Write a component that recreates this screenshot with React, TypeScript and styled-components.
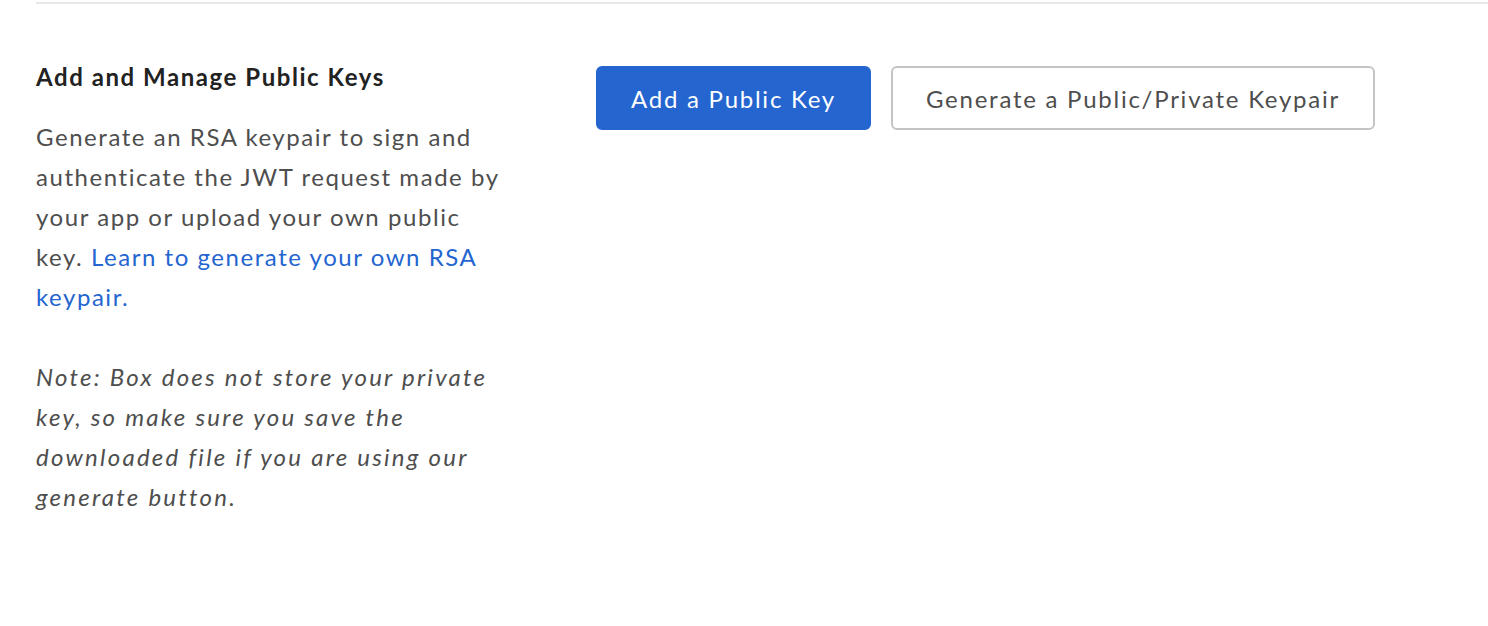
import * as React from "react";
import styled, { createGlobalStyle } from "styled-components";

const GlobalStyle = createGlobalStyle`
  body {
    margin: 0;
    background: #ffffff;
    font-family: Lato, "Noto Sans", sans-serif;
  }
`;

const Page = styled.div`
  padding-left: 36px;
  padding-top: 2px;
`;

const Divider = styled.hr`
  margin: 0;
  border: 0;
  border-top: 2px solid #e8e8e8;
`;

const Section = styled.section`
  display: grid;
  grid-template-columns: 470px auto;
  column-gap: 90px;
  align-items: start;
  padding-top: 55px;
`;

const Info = styled.div`
  display: flex;
  flex-direction: column;
`;

const Title = styled.h3`
  margin: 0 0 22px 0;
  font-size: 24px;
  line-height: 36px;
  font-weight: 700;
  letter-spacing: 1.55px;
  color: #222222;
`;

const Text = styled.p<{ $italic?: boolean }>`
  margin: 0 0 40px 0;
  font-size: 24px;
  line-height: 40px;
  letter-spacing: ${(p) => (p.$italic ? "2.25px" : "1.55px")};
  color: #4e4e4e;
  font-style: ${(p) => (p.$italic ? "italic" : "normal")};
`;

const Link = styled.a`
  color: #2465d0;
  text-decoration: none;
`;

const Actions = styled.div`
  display: flex;
  gap: 20px;
  padding-top: 7px;
`;

const Button = styled.button<{ $primary?: boolean }>`
  height: 64px;
  padding: 0 33px;
  border-radius: 6px;
  font-family: Lato, "Noto Sans", sans-serif;
  font-size: 24px;
  letter-spacing: 1.75px;
  cursor: pointer;
  background: ${(p) => (p.$primary ? "#2465d0" : "#ffffff")};
  color: ${(p) => (p.$primary ? "#ffffff" : "#4e4e4e")};
  border: 2px solid ${(p) => (p.$primary ? "#2465d0" : "#c4c4c4")};
`;

export default function App() {
  return (
    <>
      <GlobalStyle />
      <Page>
        <Divider />
        <Section>
          <Info>
            <Title>Add and Manage Public Keys</Title>
            <Text>
              Generate an RSA keypair to sign and authenticate the JWT request
              made by your app or upload your own public key.{" "}
              <Link href="#">Learn to generate your own RSA keypair.</Link>
            </Text>
            <Text $italic>
              Note: Box does not store your private key, so make sure you save
              the downloaded file if you are using our generate button.
            </Text>
          </Info>
          <Actions>
            <Button $primary>Add a Public Key</Button>
            <Button>Generate a Public/Private Keypair</Button>
          </Actions>
        </Section>
      </Page>
    </>
  );
}
